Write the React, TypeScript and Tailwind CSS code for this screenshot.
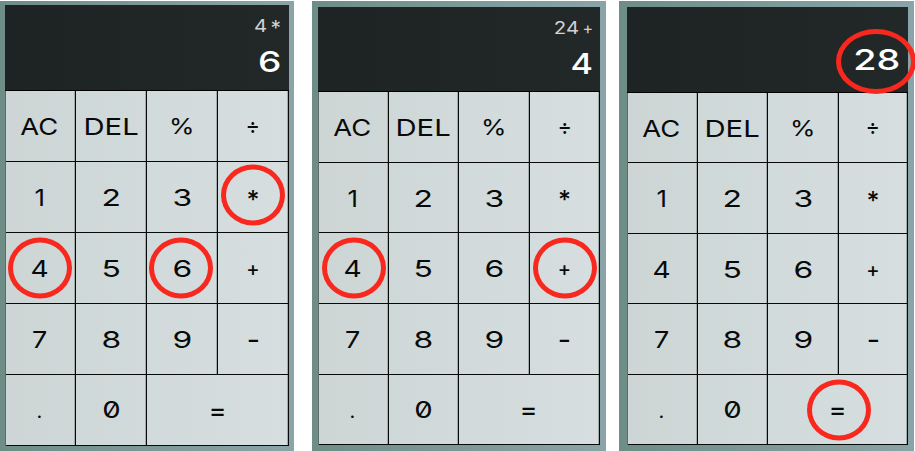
import type { ReactNode } from "react";

const FONT = "font-['Inter','DejaVu_Sans',sans-serif]";

type Key = { label: string; text: string; span?: boolean };

const DIGIT = "text-[23.4px] scale-x-[1.36] translate-y-[0.6px]";

const KEYS: Key[] = [
  { label: "AC", text: "text-[23.4px] scale-x-[1.17] -translate-x-px translate-y-[0.6px]" },
  { label: "DEL", text: "text-[23.4px] scale-x-[1.25] translate-y-[0.6px]" },
  { label: "%", text: "text-[22px] scale-x-[1.18]" },
  { label: "÷", text: "text-[23px] scale-x-[0.95]" },
  { label: "1", text: "text-[23.4px] scale-x-[1.1] -translate-x-px translate-y-[0.6px]" },
  { label: "2", text: DIGIT },
  { label: "3", text: DIGIT },
  { label: "*", text: "text-[25px] font-medium translate-y-[3px]" },
  { label: "4", text: "text-[23.4px] scale-x-[1.2] -translate-x-px translate-y-[0.6px]" },
  { label: "5", text: DIGIT },
  { label: "6", text: DIGIT },
  { label: "+", text: "text-[20px] font-medium translate-y-px" },
  { label: "7", text: "text-[23.4px] scale-x-[1.15] -translate-x-px translate-y-[0.6px]" },
  { label: "8", text: DIGIT },
  { label: "9", text: DIGIT },
  { label: "-", text: "text-[23px] font-medium scale-x-[1.25] translate-y-px" },
  { label: ".", text: "text-[20px] -translate-x-px translate-y-px" },
  { label: "0", text: "text-[23.4px] scale-x-[1.25] slashed-zero" },
  { label: "=", text: "text-[23px] font-medium scale-x-[1.15] translate-y-px", span: true },
];

function Ring() {
  return (
    <span className="pointer-events-none absolute top-1/2 left-1/2 z-10 h-[61px] w-[64px] -translate-x-1/2 -translate-y-1/2 rounded-[50%] border-[5px] border-[#f8281f]" />
  );
}

type CalculatorProps = {
  frame: string;
  grid: string;
  rings: Record<string, string>;
  children: ReactNode;
};

function Calculator({ frame, grid, rings, children }: CalculatorProps) {
  return (
    <section className={`mt-px h-[450px] shrink-0 bg-linear-to-r from-[#6e8d87] to-[#8aa4a8] ${frame}`}>
      {children}
      <div className={`grid border-l border-[#5d6c6b] bg-linear-to-r from-[#cdd6d5] to-[#d6dee0] ${grid}`}>
        {KEYS.map((key) => (
          <button
            key={key.label}
            className={`relative flex items-center justify-center border-r border-b border-[#080a0a] text-[#080a0a] shadow-[inset_-1px_0_0_#a3abaa] ${key.span ? "col-span-2" : ""}`}
          >
            <span className={`inline-block leading-none ${key.text}`}>{key.label}</span>
            {key.label in rings && (
              <span className={`absolute inset-0 ${rings[key.label]}`}>
                <Ring />
              </span>
            )}
          </button>
        ))}
      </div>
    </section>
  );
}

const SCREEN = "flex flex-col items-end border-b border-black bg-linear-to-r from-[#1e2423] to-[#222828]";
const PREVIOUS = "flex items-center text-[17px] leading-[17px] text-[#cfd3d3]";
const CURRENT = "origin-right text-[29px] leading-[29px] font-medium text-white";

export default function App() {
  return (
    <main className={`flex h-[451px] w-[915px] overflow-hidden bg-white ${FONT}`}>
      <Calculator
        frame="w-[294px] pt-[4px] pl-[5px]"
        grid="w-[284px] grid-cols-[70px_71px_71px_71px] grid-rows-[71px_71px_71px_71px_71px]"
        rings={{ "*": "-translate-y-[2px]", "4": "-translate-x-px", "6": "-translate-x-px" }}
      >
        <div className={`h-[86px] w-[284px] pt-[13px] pr-[8px] ${SCREEN}`}>
          <div className={PREVIOUS}>
            <span className="mr-[4px] scale-x-[1.2]">4</span>
            <span className="translate-y-[2px] text-[21px]">*</span>
          </div>
          <div className={`mt-[12px] scale-x-[1.28] ${CURRENT}`}>6</div>
        </div>
      </Calculator>

      <Calculator
        frame="ml-[18px] w-[294px] pt-[6px] pl-[6px]"
        grid="w-[282px] grid-cols-[70px_70px_71px_70px] grid-rows-[71px_70px_71px_71px_70px]"
        rings={{ "4": "", "+": "" }}
      >
        <div className={`h-[85px] w-[282px] pt-[13px] pr-[7px] ${SCREEN}`}>
          <div className={PREVIOUS}>
            <span className="mr-[3px] origin-right scale-x-[1.2]">24</span>
            <span className="text-[16px]">+</span>
          </div>
          <div className={`mt-[12px] scale-x-[1.18] ${CURRENT}`}>4</div>
        </div>
      </Calculator>

      <Calculator
        frame="ml-[13px] w-[295px] pt-[6px] pl-[8px]"
        grid="w-[281px] grid-cols-[70px_70px_71px_69px] grid-rows-[70px_71px_70px_71px_70px]"
        rings={{ "=": "translate-x-px" }}
      >
        <div className={`relative h-[86px] w-[281px] pt-[38px] pr-[8px] ${SCREEN}`}>
          <div className={`scale-x-[1.3] ${CURRENT}`}>28</div>
          <span className="absolute top-[22px] -right-[8px] z-10 h-[65px] w-[80px] rounded-[50%] border-[5px] border-[#f8281f]" />
        </div>
      </Calculator>
    </main>
  );
}
